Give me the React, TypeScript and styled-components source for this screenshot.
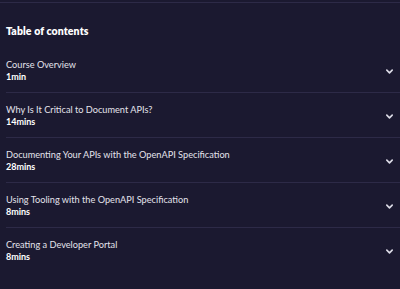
import React from 'react';
import styled, { createGlobalStyle } from 'styled-components';

const GlobalStyle = createGlobalStyle`
	html, body {
		margin: 0;
		padding: 0;
		background-color: #1b1930;
	}
	body {
		font-family: Lato, 'Noto Sans', sans-serif;
	}
`;

const Page = styled.div`
	width: 400px;
	height: 289px;
	padding-top: 2px;
	box-sizing: border-box;
	overflow: hidden;
`;

const Section = styled.section`
	border-top: 1px solid #2d2a47;
	padding: 0 0 0 6px;
`;

const Heading = styled.h2`
	margin: 22px 0 11px;
	line-height: 12px;
	font-size: 10.5px;
	font-weight: 800;
	color: #ffffff;
	letter-spacing: 0.1px;
`;

const Row = styled.div<{ $last?: boolean }>`
	display: flex;
	align-items: center;
	justify-content: space-between;
	padding: 11px 6px 10px 0;
	border-bottom: 1px solid ${(p) => (p.$last ? 'transparent' : '#2d2a47')};
`;

const Info = styled.div`
	display: flex;
	flex-direction: column;
`;

const Title = styled.div`
	font-size: 9.2px;
	line-height: 12px;
	color: #e4e3ec;
`;

const Duration = styled.div`
	font-size: 9px;
	line-height: 11px;
	font-weight: 700;
	color: #ffffff;
`;

const Chevron = styled.svg`
	width: 9px;
	height: 9px;
	margin-top: 2px;
	color: #dcdbe6;
`;

const lessons = [
	{ title: 'Course Overview', time: '1min' },
	{ title: 'Why Is It Critical to Document APIs?', time: '14mins' },
	{ title: 'Documenting Your APIs with the OpenAPI Specification', time: '28mins' },
	{ title: 'Using Tooling with the OpenAPI Specification', time: '8mins' },
	{ title: 'Creating a Developer Portal', time: '8mins' },
];

function App() {
	return (
		<Page>
			<GlobalStyle />
			<Section>
				<Heading>Table of contents</Heading>
				{lessons.map((lesson, i) => (
					<Row key={lesson.title} $last={i === lessons.length - 1}>
						<Info>
							<Title>{lesson.title}</Title>
							<Duration>{lesson.time}</Duration>
						</Info>
						<Chevron viewBox="0 0 10 10" fill="none">
							<path d="M2 3.5 L5 6.5 L8 3.5" stroke="currentColor" strokeWidth="1.8" strokeLinecap="round" strokeLinejoin="round" />
						</Chevron>
					</Row>
				))}
			</Section>
		</Page>
	);
}

export default App;
